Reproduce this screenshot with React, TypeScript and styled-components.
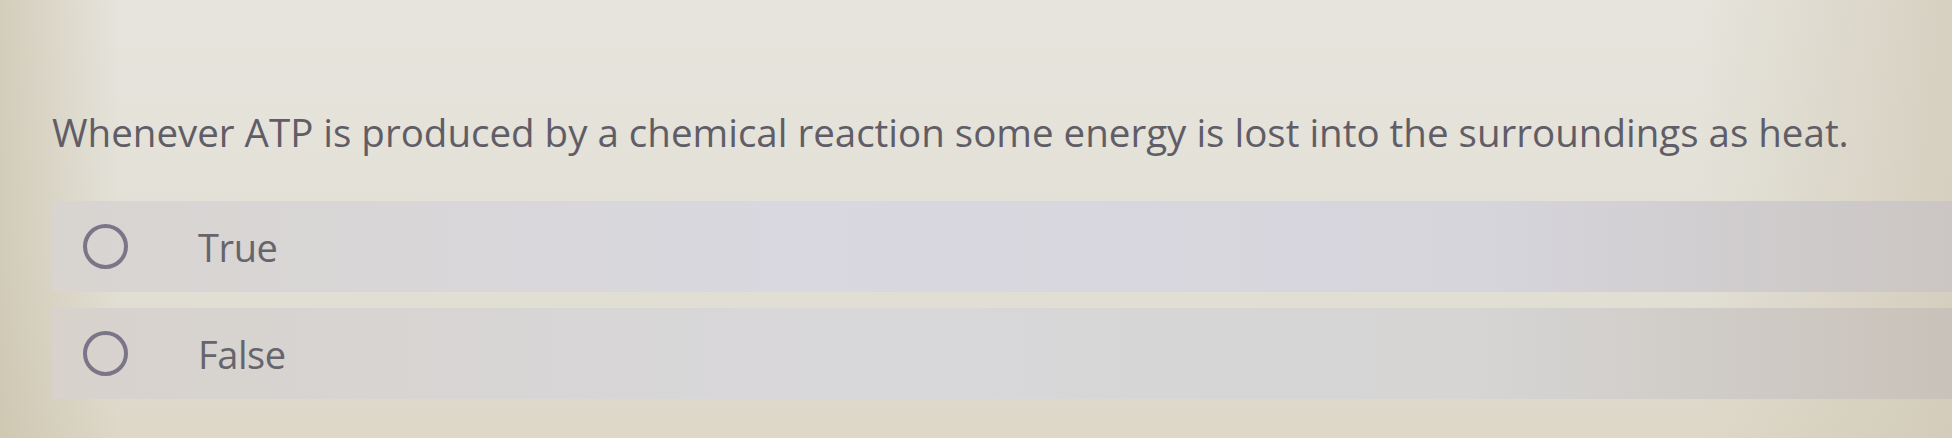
import React from 'react';
import styled, { createGlobalStyle } from 'styled-components';

const GlobalStyle = createGlobalStyle`
  html, body {
    margin: 0;
    padding: 0;
    height: 100%;
  }
  body {
    width: 1952px;
    height: 438px;
    overflow: hidden;
    font-family: 'Open Sans', 'Noto Sans', sans-serif;
    background:
      linear-gradient(90deg, rgba(196, 186, 160, 0.55) 0px, rgba(220, 214, 198, 0) 120px,
        rgba(230, 228, 218, 0) 1700px, rgba(205, 196, 176, 0.6) 1952px),
      linear-gradient(180deg, #e6e4dc 0%, #e2e0d6 60%, #ddd8c8 100%);
  }
`;

const Page = styled.div`
  padding: 106px 0 0 52px;
`;

const Question = styled.p`
  margin: 0 0 43px 0;
  font-size: 38.5px;
  line-height: 52px;
  letter-spacing: 0;
  color: #605d67;
  white-space: nowrap;
`;

const Options = styled.div`
  display: flex;
  flex-direction: column;
  gap: 16px;
`;

const Option = styled.label<{ $tint: string }>`
  display: flex;
  align-items: center;
  height: 91px;
  padding-left: 31px;
  background: ${(p) => p.$tint};
  cursor: pointer;
`;

const Radio = styled.span`
  width: 37px;
  height: 37px;
  border-radius: 50%;
  border: 4px solid #7a7587;
  box-sizing: content-box;
  flex-shrink: 0;
`;

const OptionText = styled.span`
  margin-left: 70px;
  font-size: 38px;
  letter-spacing: -0.4px;
  color: #66646c;
`;

const answers = [
  { label: 'True', tint: 'linear-gradient(90deg, #d8d4d0 0%, #d9d8e0 40%, #d6d5dc 75%, #cbc6c3 100%)' },
  { label: 'False', tint: 'linear-gradient(90deg, #d7d2cc 0%, #d8d7da 40%, #d6d5d4 75%, #c9c2ba 100%)' },
];

export default function App() {
  return (
    <>
      <GlobalStyle />
      <Page>
        <Question>
          Whenever ATP is produced by a chemical reaction some energy is lost into the surroundings as heat.
        </Question>
        <Options>
          {answers.map((a) => (
            <Option key={a.label} $tint={a.tint}>
              <Radio />
              <OptionText>{a.label}</OptionText>
            </Option>
          ))}
        </Options>
      </Page>
    </>
  );
}
